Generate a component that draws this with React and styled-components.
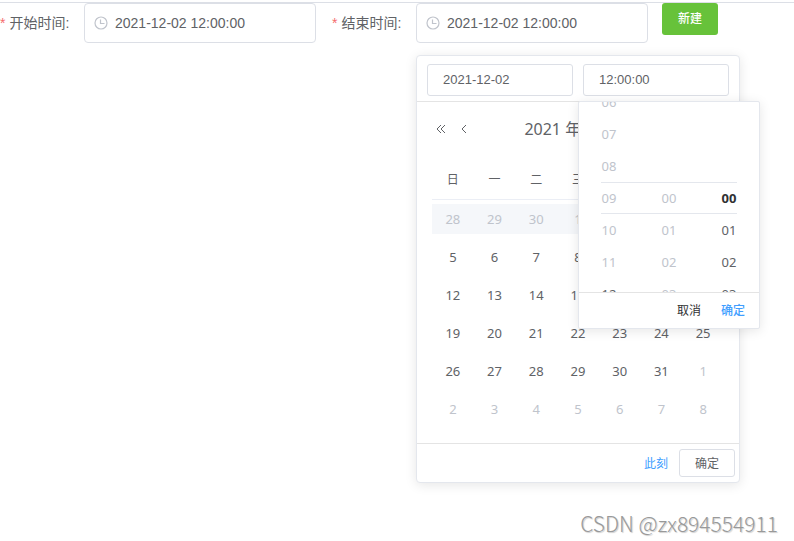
import React from 'react'
import styled, { createGlobalStyle } from 'styled-components'

const weekDays = ['日', '一', '二', '三', '四', '五', '六']

const weeks = [
	[28, 29, 30, 1, 2, 3, 4],
	[5, 6, 7, 8, 9, 10, 11],
	[12, 13, 14, 15, 16, 17, 18],
	[19, 20, 21, 22, 23, 24, 25],
	[26, 27, 28, 29, 30, 31, 1],
	[2, 3, 4, 5, 6, 7, 8]
]

const isOtherMonth = (week, day) =>
	(week === 0 && day > 7) || (week > 3 && day < 9)

const hours = ['06', '07', '08', '09', '10', '11', '12']
const minutes = ['00', '01', '02', '03']
const seconds = ['00', '01', '02', '03']

const ClockIcon = () => (
	<Clock viewBox="0 0 14 14" aria-hidden="true">
		<circle cx="7" cy="7" r="6" />
		<path d="M6.5 3.5V7.5H10.5" />
	</Clock>
)

const Chevron = ({ double, right }) => (
	<ChevronSvg viewBox="0 0 12 12" $right={right} aria-hidden="true">
		{double ? <path d="M6 2L2 6L6 10M10 2L6 6L10 10" /> : <path d="M7 2L3 6L7 10" />}
	</ChevronSvg>
)

const DateTimeField = ({ id, label, children }) => (
	<Field>
		<Label htmlFor={id}>{label}:</Label>
		<Picker>
			<ClockIcon />
			<DateInput id={id} type="text" defaultValue="2021-12-02 12:00:00" />
			{children}
		</Picker>
	</Field>
)

const TimePanel = () => (
	<TimePopup>
		<Spinners>
			<Spinner $lead={0}>
				{hours.map(h => (
					<TimeItem key={h} $disabled={h !== '12'}>{h}</TimeItem>
				))}
			</Spinner>
			<Spinner $lead={3}>
				{minutes.map(m => (
					<TimeItem key={m} $disabled>{m}</TimeItem>
				))}
			</Spinner>
			<Spinner $lead={3}>
				{seconds.map(s => (
					<TimeItem key={s} $active={s === '00'}>{s}</TimeItem>
				))}
			</Spinner>
			<ActiveLines />
		</Spinners>
		<TimeFooter>
			<TimeButton type="button">取消</TimeButton>
			<TimeButton type="button" $confirm>确定</TimeButton>
		</TimeFooter>
	</TimePopup>
)

const Calendar = () => (
	<CalendarBody>
		<MonthBar>
			<ArrowButton type="button" aria-label="前一年"><Chevron double /></ArrowButton>
			<ArrowButton type="button" aria-label="上个月"><Chevron /></ArrowButton>
			<MonthTitle>
				<span>2021 年</span>
				<span>12 月</span>
			</MonthTitle>
			<ArrowButton type="button" aria-label="下个月"><Chevron right /></ArrowButton>
			<ArrowButton type="button" aria-label="后一年"><Chevron double right /></ArrowButton>
		</MonthBar>
		<DateTable>
			<thead>
				<tr>
					{weekDays.map(d => <WeekDay key={d} scope="col">{d}</WeekDay>)}
				</tr>
			</thead>
			<tbody>
				{weeks.map((days, week) => (
					<tr key={week}>
						{days.map(day => (
							<DayCell key={day}>
								<Day $shaded={week === 0} $muted={week === 0 || isOtherMonth(week, day)}>
									{day}
								</Day>
							</DayCell>
						))}
					</tr>
				))}
			</tbody>
		</DateTable>
	</CalendarBody>
)

const App = () => (
	<Page>
		<GlobalStyle />
		<Form onSubmit={e => e.preventDefault()}>
			<DateTimeField id="start" label="开始时间" />
			<DateTimeField id="end" label="结束时间">
				<DatePopup>
					<PopupHeader>
						<SmallInput type="text" aria-label="选择日期" defaultValue="2021-12-02" />
						<TimeWrap>
							<SmallInput type="text" aria-label="选择时间" defaultValue="12:00:00" />
							<TimePanel />
						</TimeWrap>
					</PopupHeader>
					<Calendar />
					<PopupFooter>
						<NowButton type="button">此刻</NowButton>
						<ConfirmButton type="button">确定</ConfirmButton>
					</PopupFooter>
				</DatePopup>
			</DateTimeField>
			<CreateButton type="submit">新建</CreateButton>
		</Form>
		<Watermark>CSDN @zx894554911</Watermark>
	</Page>
)

export default App

const GlobalStyle = createGlobalStyle`
	* {
		box-sizing: border-box;
	}
	body {
		margin: 0;
		background: #fff;
		color: #606266;
		font-family: 'Noto Sans', 'Noto Sans CJK SC', sans-serif;
		font-size: 13px;
	}
	button, input {
		font-family: inherit;
		outline: none;
	}
	button {
		cursor: pointer;
	}
`

const Page = styled.main`
	position: relative;
	min-height: 100vh;
	padding-top: 2px;
`

const Form = styled.form`
	display: flex;
	align-items: flex-start;
	border-top: 1px solid #dcdfe6;
`

const Field = styled.div`
	display: flex;

	& + & {
		margin-left: 16px;
	}
`

const Label = styled.label`
	width: 84px;
	padding-right: 15px;
	font-family: 'Liberation Sans', 'Noto Sans CJK SC', sans-serif;
	font-size: 14px;
	line-height: 40px;
	text-align: right;
	white-space: nowrap;

	&::before {
		content: '*';
		margin-right: 4px;
		color: #f56c6c;
	}
`

const Picker = styled.div`
	position: relative;
	width: 232px;
`

const Clock = styled.svg`
	position: absolute;
	top: 13px;
	left: 10px;
	width: 14px;
	height: 14px;
	fill: none;
	stroke: #c0c4cc;
	stroke-width: 1.2;
`

const DateInput = styled.input`
	display: block;
	width: 100%;
	height: 40px;
	padding: 0 30px;
	border: 1px solid #dcdfe6;
	border-radius: 4px;
	background: none;
	color: #606266;
	font-family: 'Liberation Sans', sans-serif;
	font-size: 14px;
`

const CreateButton = styled.button`
	height: 32px;
	margin-left: 14px;
	padding: 0 16px 2px;
	border: 0;
	border-radius: 3px;
	background: #67c23a;
	color: #fff;
	font-size: 12px;
	font-weight: 500;
`

const DatePopup = styled.div`
	position: absolute;
	top: calc(100% + 12px);
	left: 0;
	width: 324px;
	border: 1px solid #e4e7ed;
	border-radius: 4px;
	background: #fff;
	box-shadow: 0 2px 12px rgba(0, 0, 0, 0.1);
`

const PopupHeader = styled.div`
	display: grid;
	grid-template-columns: 1fr 1fr;
	gap: 10px;
	padding: 8px 10px 5px;
	border-bottom: 1px solid #e4e4e4;
`

const SmallInput = styled.input`
	display: block;
	width: 100%;
	height: 32px;
	padding: 0 15px 2px;
	border: 1px solid #dcdfe6;
	border-radius: 3px;
	color: #606266;
	font-family: 'Liberation Sans', sans-serif;
	font-size: 13px;
`

const TimeWrap = styled.div`
	position: relative;
`

const TimePopup = styled.div`
	position: absolute;
	z-index: 1;
	top: calc(100% + 5px);
	left: -5px;
	width: 182px;
	border: 1px solid #e4e7ed;
	border-radius: 2px;
	background: #fff;
	box-shadow: 0 2px 12px rgba(0, 0, 0, 0.1);
`

const Spinners = styled.div`
	position: relative;
	display: grid;
	grid-template-columns: repeat(3, 1fr);
	height: 190px;
	overflow: hidden;
`

const Spinner = styled.ul`
	margin: ${({ $lead }) => $lead * 32 - 16}px 0 0;
	padding: 0;
	list-style: none;
	text-align: center;
`

const TimeItem = styled.li`
	height: 32px;
	line-height: 32px;
	color: ${({ $disabled, $active }) => ($disabled ? '#c0c4cc' : $active ? '#303133' : '#606266')};
	font-weight: ${({ $active }) => ($active ? 700 : 400)};
`

const ActiveLines = styled.div`
	position: absolute;
	top: 80px;
	left: 22px;
	right: 22px;
	height: 32px;
	border-top: 1px solid #e4e7ed;
	border-bottom: 1px solid #e4e7ed;
`

const TimeFooter = styled.div`
	display: flex;
	justify-content: flex-end;
	gap: 10px;
	height: 36px;
	padding: 0 9px;
	border-top: 1px solid #e4e4e4;
`

const TimeButton = styled.button`
	padding: 0 5px 2px;
	border: 0;
	background: none;
	color: ${({ $confirm }) => ($confirm ? '#409eff' : '#303133')};
	font-size: 12px;
	font-weight: ${({ $confirm }) => ($confirm ? 500 : 400)};
`

const CalendarBody = styled.div`
	padding: 12px 15px 15px;
`

const MonthBar = styled.div`
	display: flex;
	align-items: center;
	gap: 12px;
	height: 30px;
	margin-bottom: 16px;
	padding: 0 3px;
`

const ArrowButton = styled.button`
	display: flex;
	padding: 0;
	border: 0;
	background: none;
	color: #606266;
`

const ChevronSvg = styled.svg`
	width: 12px;
	height: 12px;
	fill: none;
	stroke: currentColor;
	transform: ${({ $right }) => ($right ? 'scaleX(-1)' : 'none')};
`

const MonthTitle = styled.div`
	display: flex;
	flex: 1;
	justify-content: center;
	gap: 12px;
	font-size: 16px;
	line-height: 30px;
`

const DateTable = styled.table`
	width: 100%;
	table-layout: fixed;
	border-spacing: 0;
	text-align: center;
`

const WeekDay = styled.th`
	height: 40px;
	padding: 0 0 2px;
	border-bottom: 1px solid #ebeef5;
	font-size: 12px;
	font-weight: 400;
`

const DayCell = styled.td`
	padding: 4px 0;
`

const Day = styled.div`
	height: 30px;
	line-height: 30px;
	background: ${({ $shaded }) => ($shaded ? '#f5f7fa' : 'none')};
	color: ${({ $muted }) => ($muted ? '#c0c4cc' : '#606266')};
`

const PopupFooter = styled.div`
	display: flex;
	justify-content: flex-end;
	align-items: center;
	gap: 11px;
	padding: 5px 4px;
	border-top: 1px solid #e4e4e4;
`

const NowButton = styled.button`
	padding: 0;
	border: 0;
	background: none;
	color: #409eff;
	font-size: 12px;
`

const ConfirmButton = styled.button`
	height: 28px;
	padding: 0 15px;
	border: 1px solid #dcdfe6;
	border-radius: 3px;
	background: #fff;
	color: #606266;
	font-size: 12px;
`

const Watermark = styled.div`
	position: absolute;
	right: 16px;
	bottom: 6px;
	color: #999;
	font-family: 'Noto Sans CJK SC', sans-serif;
	font-size: 21px;
	font-weight: 300;
	line-height: 24px;
	text-shadow: 1px 1px 1px rgba(0, 0, 0, 0.2);
`
